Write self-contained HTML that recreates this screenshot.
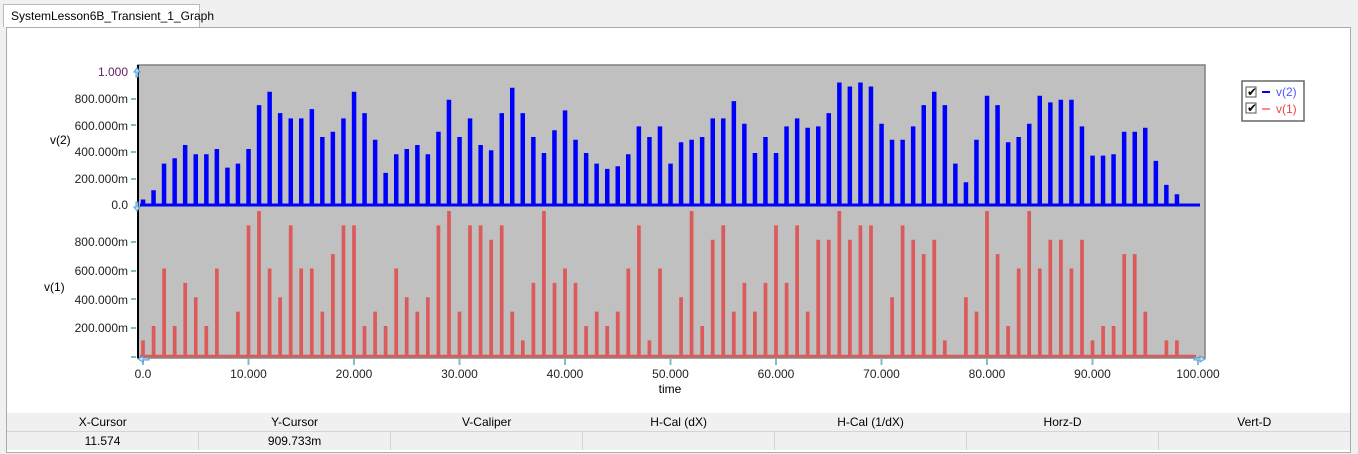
<!DOCTYPE html><html><head><style>
body{margin:0;width:1358px;height:454px;background:#f0f0f0;font-family:"Liberation Sans",sans-serif;position:relative;overflow:hidden}
.tab{position:absolute;left:3px;top:4px;width:197px;height:23px;background:#fff;border:1px solid #bbb;border-bottom:none;font-size:12px;line-height:23px;padding-left:7px;box-sizing:border-box}
.frame{position:absolute;left:6px;top:27px;width:1345px;height:426px;border:1px solid #aaa;background:#fff;box-sizing:border-box}
table{position:absolute;left:7px;top:413px;width:1343px;border-collapse:collapse;font-size:12px;background:#f0f0f0}
td{text-align:center;height:18px;padding:0;width:192px}
tr.v td{border-left:1px solid #d4d4d4;border-top:1px solid #d4d4d4}
tr.v td:first-child{border-left:none}
svg text{font-family:"Liberation Sans",sans-serif;font-size:12px}
</style></head><body>
<div class="frame"></div>
<div class="tab">SystemLesson6B_Transient_1_Graph</div>
<svg id="s" width="1358" height="454" style="position:absolute;left:0;top:0">
<rect x="138" y="65" width="1067" height="293" fill="#c0c0c0" stroke="#808080" stroke-width="1.5"/>
<line x1="138" y1="65" x2="138" y2="358" stroke="#000" stroke-width="2"/>
<g text-anchor="end" fill="#222">
<text x="128" y="76" fill="#602060">1.000</text>
<text x="128" y="103">800.000m</text><text x="128" y="130">600.000m</text><text x="128" y="156">400.000m</text><text x="128" y="183">200.000m</text><text x="128" y="209">0.0</text>
<text x="128" y="246">800.000m</text><text x="128" y="275">600.000m</text><text x="128" y="304">400.000m</text><text x="128" y="332">200.000m</text>
</g>
<text x="50" y="144">v(2)</text><text x="44" y="291" font-size="14">v(1)</text>
<g stroke="#7fbfbf" stroke-width="2">
<line x1="131" y1="99" x2="136" y2="99"/><line x1="131" y1="125" x2="136" y2="125"/><line x1="131" y1="152" x2="136" y2="152"/><line x1="131" y1="179" x2="136" y2="179"/>
<line x1="131" y1="242" x2="136" y2="242"/><line x1="131" y1="271" x2="136" y2="271"/><line x1="131" y1="299" x2="136" y2="299"/><line x1="131" y1="328" x2="136" y2="328"/><line x1="131" y1="357" x2="136" y2="357"/>
</g>
<g id="xt" text-anchor="middle" fill="#222"></g>
<text x="670" y="393" text-anchor="middle">time</text>
<path id="blue" fill="none" stroke="#0000ff" stroke-width="3"/>
<path id="red" fill="none" stroke="#e04848" stroke-width="2.5" stroke-opacity="0.85"/>
<path d="M137 68 l-3 4 h2 v5 h2 v-5 h2z M137 211 l-3 -4 h2 v-5 h2 v5 h2z" fill="#cde" stroke="#4a9ee0"/>
<path d="M138 359 l5 -3 v2 h6 v2 h-6 v2z M1205 359 l-5 -3 v2 h-6 v2 h6 v2z" fill="#cde" stroke="#4a9ee0"/>
<rect x="1242" y="81" width="62" height="40" fill="#fff" stroke="#666" stroke-width="1.5"/>
<rect x="1246" y="87" width="10" height="10" fill="#fff" stroke="#555"/><text x="1247" y="96" font-size="10">✔</text>
<rect x="1246" y="103" width="10" height="10" fill="#fff" stroke="#555"/><text x="1247" y="112" font-size="10">✔</text>
<line x1="1262" y1="92" x2="1270" y2="92" stroke="#00f" stroke-width="2"/><text x="1276" y="96" fill="#55f">v(2)</text>
<line x1="1262" y1="109" x2="1270" y2="109" stroke="#f88" stroke-width="2"/><text x="1276" y="113" fill="#e44">v(1)</text>
</svg>
<table><tr><td>X-Cursor</td><td>Y-Cursor</td><td>V-Caliper</td><td>H-Cal (dX)</td><td>H-Cal (1/dX)</td><td>Horz-D</td><td>Vert-D</td></tr>
<tr class="v"><td>11.574</td><td>909.733m</td><td></td><td></td><td></td><td></td><td></td></tr></table>
<script>
var R=[.1,.2,.6,.2,.5,.4,.2,.6,0,.3,.9,1,.6,.4,.9,.6,.6,.3,.7,.9,.9,.2,.3,.2,.6,.4,.3,.4,.9,1,.3,.9,.9,.8,.9,.3,.1,.5,1,.5,.6,.5,.2,.3,.2,.3,.6,.9,.1,.6,0,.4,1,.2,.8,.9,.3,.5,.3,.5,.9,.5,.9,.3,.8,.8,1,.8,.9,.9,0,.4,.9,.8,.7,.8,.1,0,.4,.3,1,.7,.2,.6,1,.6,.8,.8,.6,.8,.1,.2,.2,.7,.7,.3,0,.1,.1];
var B=[.03,.1,.3,.34,.44,.37,.37,.41,.27,.3,.41,.74,.84,.68,.64,.64,.71,.5,.54,.64,.84,.68,.48,.23,.37,.41,.44,.37,.54,.78,.5,.64,.44,.4,.68,.87,.68,.5,.38,.55,.7,.48,.38,.3,.26,.28,.37,.58,.5,.58,.3,.46,.48,.5,.64,.64,.77,.6,.38,.5,.38,.58,.64,.57,.58,.68,.91,.88,.91,.88,.6,.48,.48,.58,.74,.84,.74,.3,.16,.48,.81,.74,.46,.5,.6,.81,.76,.78,.78,.58,.36,.36,.37,.54,.54,.57,.32,.14,.07];
function px(t){return 143+10.55*t}
function mk(V,y0,sc,w,x0,xe){var d="M"+x0+" "+y0;for(var i=0;i<V.length;i++){if(!V[i])continue;var x=px(i)-w/2,y=(y0-V[i]*sc).toFixed(1);d+=" H"+x.toFixed(1)+" V"+y+" H"+(x+w).toFixed(1)+" V"+y0;}return d+" H"+xe;}
document.getElementById('blue').setAttribute('d',mk(B,205,133,1.5,140,1200));
document.getElementById('red').setAttribute('d',mk(R,356,143.75,1.2,140,1196));
var g=document.getElementById('xt'),h="";for(var k=0;k<=10;k++){var x=px(k*10);h+='<text x="'+x+'" y="378">'+(k==0?'0.0':(k*10).toFixed(3))+'</text><line x1="'+x+'" y1="359" x2="'+x+'" y2="365" stroke="#7fbfbf" stroke-width="2"/>';}g.innerHTML=h;
</script>
</body></html>
